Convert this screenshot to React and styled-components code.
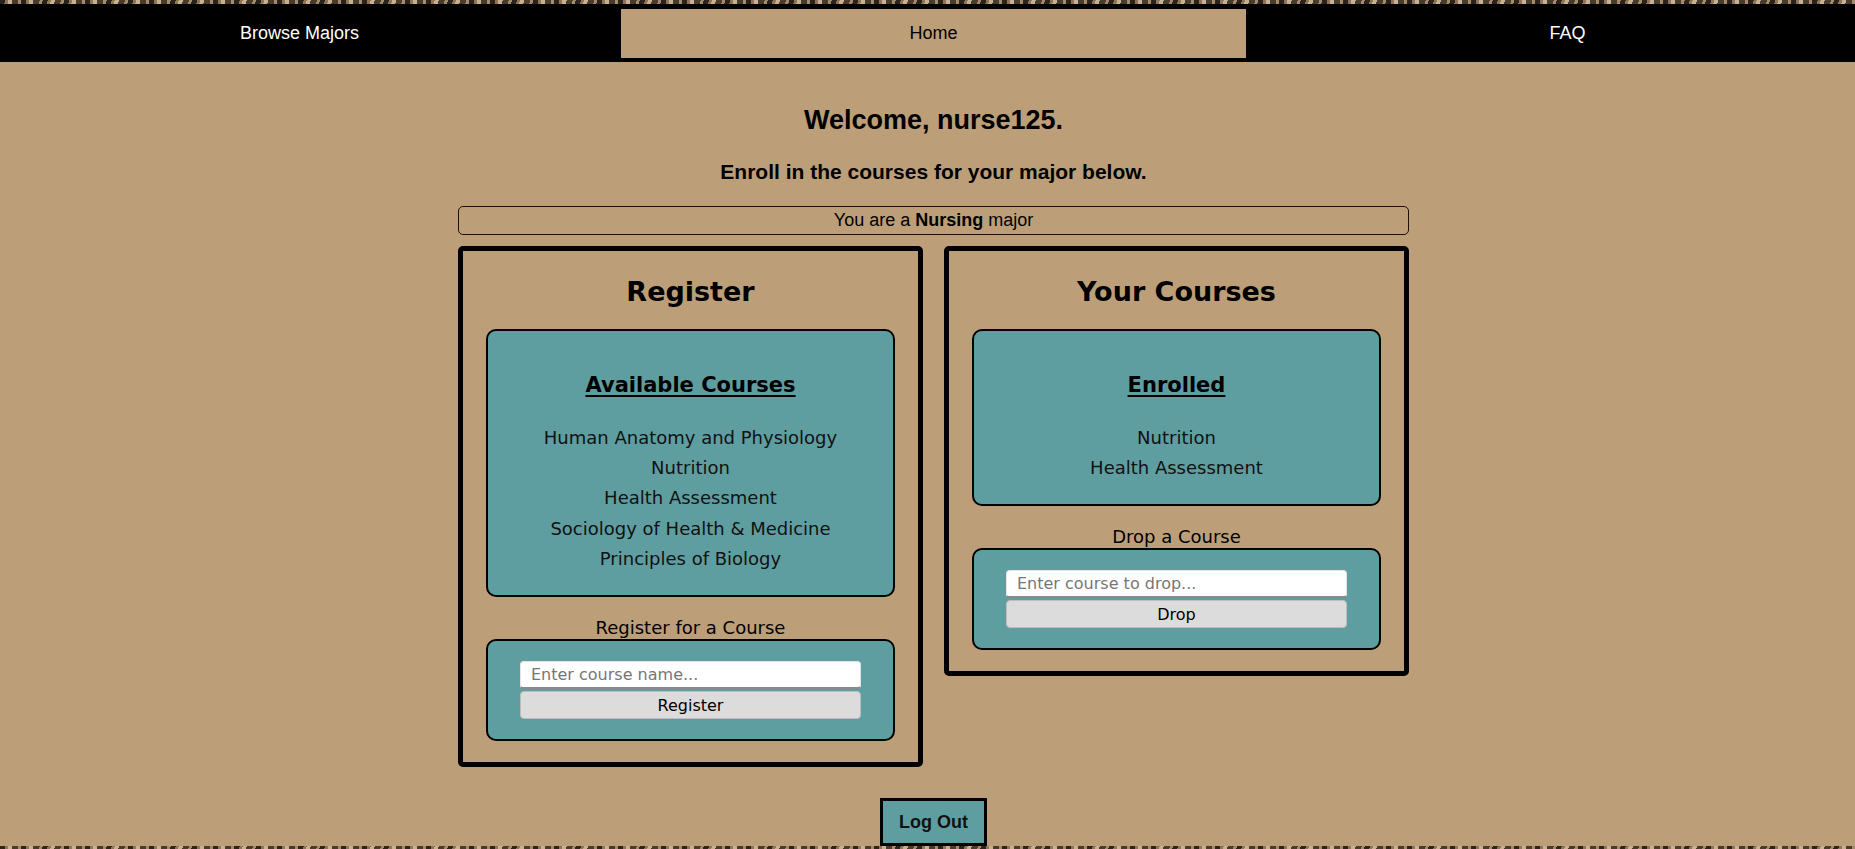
import React, { useState } from 'react';
import styled, { createGlobalStyle } from 'styled-components';

const TAN = '#bc9f79';
const TEAL = '#5f9ea0';

const GlobalStyle = createGlobalStyle`
  html, body {
    margin: 0;
    padding: 0;
  }
  body {
    font-family: "Liberation Sans", Arial, sans-serif;
    font-size: 18px;
    color: #000;
    background: repeating-linear-gradient(
      100deg,
      #2c241b 0px,
      #2c241b 5px,
      #8c7558 5px,
      #8c7558 8px,
      #c9b18c 8px,
      #c9b18c 12px,
      #4a3c2d 12px,
      #4a3c2d 18px,
      #a48b69 18px,
      #a48b69 21px
    );
    overflow: hidden;
  }
`;

const NavBar = styled.nav`
  margin-top: 4px;
  height: 58px;
  background: #000;
  display: grid;
  grid-template-columns: 621px 625px 1fr;
  align-items: stretch;
`;

const NavItem = styled.a`
  display: flex;
  align-items: center;
  justify-content: center;
  color: ${(p) => (p.$active ? '#000' : '#fff')};
  background: ${(p) => (p.$active ? TAN : 'transparent')};
  margin: ${(p) => (p.$active ? '5px 0 4px' : '0')};
  padding: ${(p) => p.$pad || '0'};
  font-size: 18px;
  text-decoration: none;
  cursor: pointer;
`;

const Main = styled.main`
  background: ${TAN};
  height: 784px;
  box-sizing: border-box;
  padding: 21px 0 0 12px;
  display: flex;
  flex-direction: column;
  align-items: center;
  text-align: center;
`;

const Welcome = styled.h2`
  font-size: 27px;
  line-height: 31px;
  font-weight: bold;
  margin: 22px 0 24px;
`;

const Subtitle = styled.h3`
  font-size: 21px;
  line-height: 24px;
  font-weight: bold;
  margin: 0 0 22px;
`;

const MajorBox = styled.div`
  width: 951px;
  height: 32px;
  box-sizing: border-box;
  border: 1px solid #1a1008;
  border-radius: 5px;
  display: flex;
  align-items: center;
  justify-content: center;
  font-size: 18px;
  margin-bottom: 11px;
`;

const CardRow = styled.div`
  width: 951px;
  display: flex;
  gap: 21px;
  align-items: flex-start;
`;

const Card = styled.section`
  flex: 1;
  box-sizing: border-box;
  border: 5px solid #000;
  border-radius: 5px;
  padding: 0 23px 21px;
  font-family: "DejaVu Sans", Verdana, sans-serif;
`;

const CardTitle = styled.h2`
  font-size: 27px;
  line-height: 32px;
  font-weight: bold;
  margin: 25px 0 21px;
`;

const TealBox = styled.div`
  background: ${TEAL};
  border: 2px solid #000;
  border-radius: 10px;
  padding: ${(p) => p.$pad};
`;

const ListHeading = styled.h3`
  font-size: 21px;
  line-height: 24px;
  font-weight: bold;
  text-decoration: underline;
  text-underline-offset: 3px;
  margin: 22px 0 26px;
`;

const CourseList = styled.ul`
  list-style: none;
  margin: 0;
  padding: 0;
`;

const CourseItem = styled.li`
  font-size: 18px;
  line-height: 30.25px;
  color: #111;
`;

const FormLabel = styled.div`
  font-size: 18px;
  line-height: 21px;
  margin: 20px 0 1px;
`;

const FormStack = styled.div`
  display: flex;
  flex-direction: column;
  gap: 2px;
`;

const TextInput = styled.input`
  box-sizing: border-box;
  height: 28px;
  width: 100%;
  border: 1px solid #e4e4e4;
  border-bottom: 2px solid #8a8a8a;
  border-radius: 4px;
  background: #fff;
  padding: 0 10px;
  font-family: "DejaVu Sans", Verdana, sans-serif;
  font-size: 16px;
  color: #000;
  outline: none;

  &::placeholder {
    color: #767676;
  }
`;

const GrayButton = styled.button`
  box-sizing: border-box;
  height: 28px;
  width: 100%;
  border: 1px solid #bdbdbd;
  border-radius: 4px;
  background: #dcdcdc;
  font-family: "DejaVu Sans", Verdana, sans-serif;
  font-size: 16px;
  color: #000;
  padding: 0;
  cursor: pointer;
`;

const LogOutButton = styled.button`
  margin-top: 31px;
  box-sizing: border-box;
  height: 53px;
  padding: 0 16px;
  background: ${TEAL};
  border: 3px solid #000;
  font-family: "Liberation Sans", Arial, sans-serif;
  font-size: 18px;
  font-weight: bold;
  color: #111;
  cursor: pointer;
`;

const available = [
  'Human Anatomy and Physiology',
  'Nutrition',
  'Health Assessment',
  'Sociology of Health & Medicine',
  'Principles of Biology',
];

const enrolled = ['Nutrition', 'Health Assessment'];

const App = () => {
  const [courseName, setCourseName] = useState('');
  const [dropName, setDropName] = useState('');

  return (
    <>
      <GlobalStyle />
      <NavBar>
        <NavItem $pad="0 22px 0 0">Browse Majors</NavItem>
        <NavItem $active>Home</NavItem>
        <NavItem $pad="0 0 0 34px">FAQ</NavItem>
      </NavBar>

      <Main>
        <Welcome>Welcome, nurse125.</Welcome>
        <Subtitle>Enroll in the courses for your major below.</Subtitle>
        <MajorBox>
          <span>
            You are a <b>Nursing</b> major
          </span>
        </MajorBox>

        <CardRow>
          <Card>
            <CardTitle>Register</CardTitle>
            <TealBox $pad="20px 20px 21px">
              <ListHeading>Available Courses</ListHeading>
              <CourseList>
                {available.map((c) => (
                  <CourseItem key={c}>{c}</CourseItem>
                ))}
              </CourseList>
            </TealBox>
            <FormLabel>Register for a Course</FormLabel>
            <TealBox $pad="20px 32px">
              <FormStack>
                <TextInput
                  type="text"
                  placeholder="Enter course name..."
                  value={courseName}
                  onChange={(e) => setCourseName(e.target.value)}
                />
                <GrayButton>Register</GrayButton>
              </FormStack>
            </TealBox>
          </Card>

          <Card>
            <CardTitle>Your Courses</CardTitle>
            <TealBox $pad="20px 20px 21px">
              <ListHeading>Enrolled</ListHeading>
              <CourseList>
                {enrolled.map((c) => (
                  <CourseItem key={c}>{c}</CourseItem>
                ))}
              </CourseList>
            </TealBox>
            <FormLabel>Drop a Course</FormLabel>
            <TealBox $pad="20px 32px">
              <FormStack>
                <TextInput
                  type="text"
                  placeholder="Enter course to drop..."
                  value={dropName}
                  onChange={(e) => setDropName(e.target.value)}
                />
                <GrayButton>Drop</GrayButton>
              </FormStack>
            </TealBox>
          </Card>
        </CardRow>

        <LogOutButton>Log Out</LogOutButton>
      </Main>
    </>
  );
};

export default App;
